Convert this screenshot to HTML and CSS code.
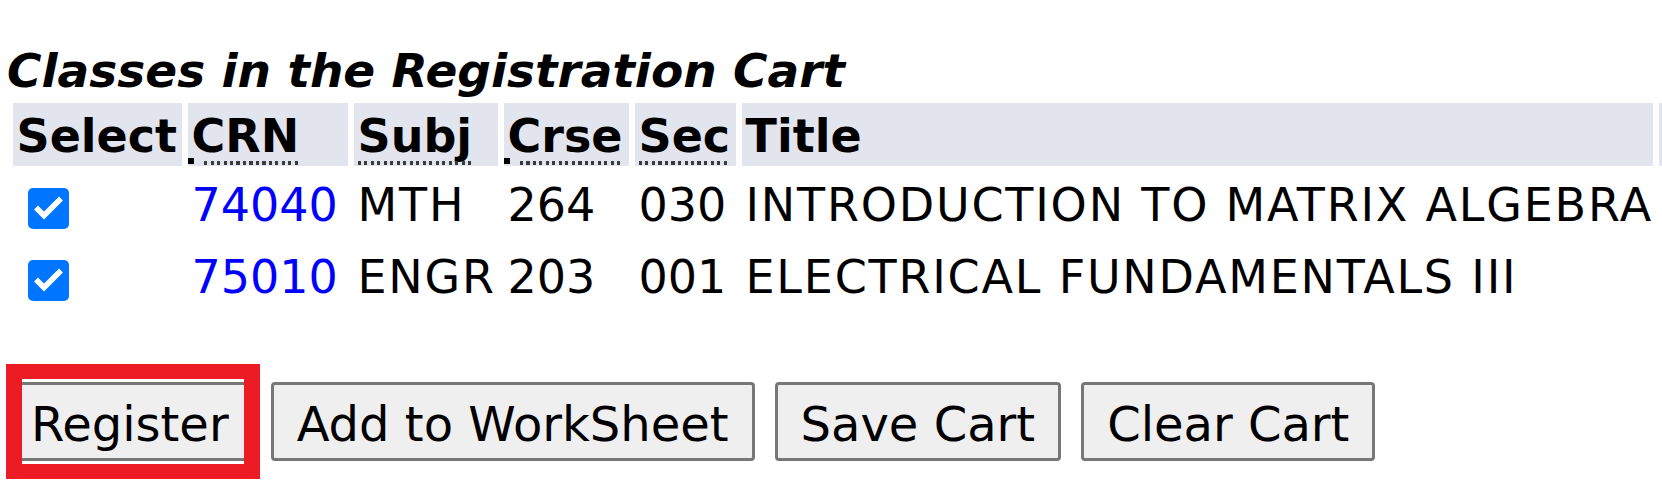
FILE: index.html
```html
<!DOCTYPE html>
<html lang="en">
<head>
<meta charset="utf-8">
<title>Registration Cart</title>
<link rel="stylesheet" href="styles.css">
</head>
<body>
<div class="page">
  <table class="cart">
    <caption class="cap">Classes in the Registration Cart</caption>
    <thead>
      <tr>
        <th class="w-sel">Select</th>
        <th class="w-crn"><span class="abbr abbr-sq">CRN</span></th>
        <th class="w-subj"><span class="abbr">Subj</span></th>
        <th class="w-crse"><span class="abbr abbr-sq">Crse</span></th>
        <th class="w-sec"><span class="abbr">Sec</span></th>
        <th class="w-title">Title</th>
        <th class="w-more"></th>
      </tr>
    </thead>
    <tbody>
      <tr>
        <td><span class="cb"><svg viewBox="0 0 41 41" width="41" height="41"><rect width="41" height="41" rx="5" fill="#0075ff"/><polyline points="8,19.5 16,27.5 33,10.5" fill="none" stroke="#fff" stroke-width="5.5"/></svg></span></td>
        <td><a class="crn" href="#">74040</a></td>
        <td class="txt">MTH</td>
        <td>264</td>
        <td>030</td>
        <td class="txt">INTRODUCTION TO MATRIX ALGEBRA</td>
        <td></td>
      </tr>
      <tr>
        <td><span class="cb"><svg viewBox="0 0 41 41" width="41" height="41"><rect width="41" height="41" rx="5" fill="#0075ff"/><polyline points="8,19.5 16,27.5 33,10.5" fill="none" stroke="#fff" stroke-width="5.5"/></svg></span></td>
        <td><a class="crn" href="#">75010</a></td>
        <td class="txt">ENGR</td>
        <td>203</td>
        <td>001</td>
        <td class="txt">ELECTRICAL FUNDAMENTALS III</td>
        <td></td>
      </tr>
    </tbody>
  </table>

  <div class="actions">
    <div class="reg-wrap">
      <button class="btn btn-reg" type="button">Register</button>
      <span class="mark"></span>
    </div>
    <button class="btn" type="button">Add to WorkSheet</button>
    <button class="btn" type="button">Save Cart</button>
    <button class="btn" type="button">Clear Cart</button>
  </div>
</div>
</body>
</html>
```
FILE: styles.css
```css
html {
  overflow: hidden;
}
html, body {
  margin: 0;
  padding: 0;
  background: #fff;
}
body {
  font-family: "DejaVu Sans", Verdana, sans-serif;
  color: #000;
}
.page {
  padding-top: 44px;
  padding-bottom: 40px;
}
.cart {
  margin-left: 7px;
  border-collapse: separate;
  border-spacing: 6px;
  table-layout: fixed;
  width: 1858px;
  font-size: 46px;
}
.cap {
  caption-side: top;
  text-align: left;
  font-weight: bold;
  font-style: italic;
  font-size: 47px;
  line-height: 53px;
  white-space: nowrap;
}
.cart th {
  box-sizing: border-box;
  height: 63px;
  padding: 4px 3.5px 0;
  line-height: 59px;
  background: #e2e4ee;
  text-align: left;
  vertical-align: top;
  font-weight: bold;
  white-space: nowrap;
}
.cart td {
  box-sizing: border-box;
  height: 66px;
  padding: 1px 3.5px 0;
  line-height: 65px;
  vertical-align: top;
  white-space: nowrap;
  overflow: hidden;
}
.cart td.txt {
  letter-spacing: 1.8px;
}
.w-sel { width: 169px; }
.w-crn { width: 160px; }
.w-subj { width: 144px; }
.w-crse { width: 125px; }
.w-sec { width: 101px; }
.w-title { width: 911px; }
.w-more { width: 200px; }

.abbr {
  position: relative;
  display: inline-block;
  line-height: 59px;
}
.abbr::after {
  content: "";
  position: absolute;
  left: 0;
  right: 0;
  bottom: 1px;
  height: 4px;
  background: repeating-linear-gradient(to right, #3a3a3a 0 3px, transparent 3px 6.5px);
}
.abbr-sq::after {
  left: 12px;
}
.abbr-sq::before {
  content: "";
  position: absolute;
  left: -4px;
  bottom: 2px;
  width: 6px;
  height: 6px;
  background: #000;
}
.cb {
  display: block;
  width: 41px;
  height: 41px;
  margin: 15px 0 0 11.5px;
}
.cb svg {
  display: block;
}
.crn {
  color: #0000ff;
  text-decoration: none;
}

.actions {
  display: flex;
  align-items: flex-start;
  gap: 20px;
  margin-top: 66px;
  padding-left: 9px;
}
.reg-wrap {
  position: relative;
  display: flex;
}
.btn {
  box-sizing: border-box;
  height: 79px;
  margin: 0;
  padding: 5px 23px 0;
  border: 3px solid #777;
  border-radius: 4px;
  background: #efefef;
  color: #000;
  font-family: "DejaVu Sans", Verdana, sans-serif;
  font-size: 48px;
  line-height: 68px;
  white-space: nowrap;
}
.btn-reg {
  padding-left: 19px;
  padding-right: 19px;
}
.mark {
  position: absolute;
  box-sizing: border-box;
  left: -3px;
  top: -18px;
  width: 254px;
  height: 115px;
  border-style: solid;
  border-color: #ed1c24;
  border-width: 15px 16px;
}
```
